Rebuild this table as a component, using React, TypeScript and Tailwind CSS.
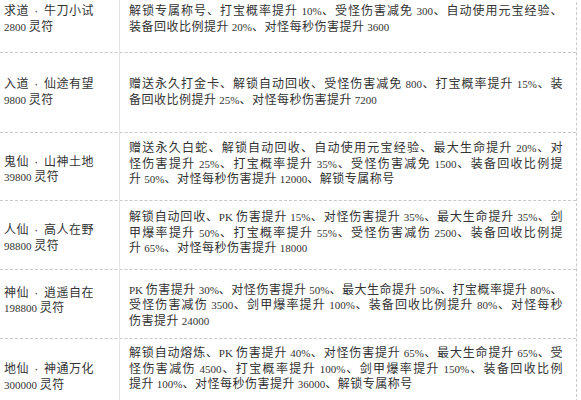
import type { ReactNode } from "react";

type Tier = {
  realm: string;
  title: string;
  price: string;
  row: string;
  left: string;
  right: string;
  lines: string[];
};

const tiers: Tier[] = [
  {
    realm: "求道",
    title: "牛刀小试",
    price: "2800",
    row: "h-[66px]",
    left: "",
    right: "",
    lines: [
      "解锁专属称号、打宝概率提升 10%、受怪伤害减免 300、自动使用元宝经验、",
      "装备回收比例提升 20%、对怪每秒伤害提升 3600",
    ],
  },
  {
    realm: "入道",
    title: "仙途有望",
    price: "9800",
    row: "h-[80px]",
    left: "",
    right: "",
    lines: [
      "赠送永久打金卡、解锁自动回收、受怪伤害减免 800、打宝概率提升 15%、装",
      "备回收比例提升 25%、对怪每秒伤害提升 7200",
    ],
  },
  {
    realm: "鬼仙",
    title: "山神土地",
    price: "39800",
    row: "h-[68px]",
    left: "pt-[7px]",
    right: "pb-[4px]",
    lines: [
      "赠送永久白蛇、解锁自动回收、自动使用元宝经验、最大生命提升 20%、对",
      "怪伤害提升 25%、打宝概率提升 35%、受怪伤害减免 1500、装备回收比例提",
      "升 50%、对怪每秒伤害提升 12000、解锁专属称号",
    ],
  },
  {
    realm: "人仙",
    title: "高人在野",
    price: "98800",
    row: "h-[69px]",
    left: "pt-[7px]",
    right: "pb-[3px]",
    lines: [
      "解锁自动回收、PK 伤害提升 15%、对怪伤害提升 35%、最大生命提升 35%、剑",
      "甲爆率提升 50%、打宝概率提升 55%、受怪伤害减伤 2500、装备回收比例提",
      "升 65%、对怪每秒伤害提升 18000",
    ],
  },
  {
    realm: "神仙",
    title: "逍遥自在",
    price: "198800",
    row: "h-[69px]",
    left: "pb-[6px]",
    right: "pt-[4px]",
    lines: [
      "PK 伤害提升 30%、对怪伤害提升 50%、最大生命提升 50%、打宝概率提升 80%、",
      "受怪伤害减伤 3500、剑甲爆率提升 100%、装备回收比例提升 80%、对怪每秒",
      "伤害提升 24000",
    ],
  },
  {
    realm: "地仙",
    title: "神通万化",
    price: "300000",
    row: "h-[68px]",
    left: "pt-[10px]",
    right: "pb-[6px]",
    lines: [
      "解锁自动熔炼、PK 伤害提升 40%、对怪伤害提升 65%、最大生命提升 65%、受",
      "怪伤害减伤 4500、打宝概率提升 100%、剑甲爆率提升 150%、装备回收比例",
      "提升 100%、对怪每秒伤害提升 36000、解锁专属称号",
    ],
  },
];

// Latin runs (numbers, "PK", %) are set narrower than the CJK text around them.
function withLatin(text: string): ReactNode {
  const parts = text.split(/([ -~]+)/);
  return parts.map((part, i) =>
    /^[ -~]+$/.test(part) ? (
      <span key={i} className="font-['Liberation_Serif'] text-[11px] tracking-normal">
        {part}
      </span>
    ) : (
      part
    ),
  );
}

export default function App() {
  return (
    <div
      className="h-[400px] w-[581px] overflow-hidden bg-white text-[12px] leading-[15.5px] tracking-[0.5px] text-[#333]"
      style={{ fontFamily: '"Liberation Sans", "Noto Sans CJK SC", sans-serif' }}
    >
      <div className="-mt-[13px] w-[577px] border-r border-dashed border-[#c8c8c8]">
        {tiers.map((tier) => (
          <div
            key={tier.realm}
            className={`flex ${tier.row} border-b border-dashed border-[#c8c8c8]`}
          >
            <div
              className={`flex w-[120px] shrink-0 flex-col justify-center border-r border-[#e2e2e2] pl-[4px] ${tier.left}`}
            >
              <p className="whitespace-nowrap">
                {tier.realm}
                <span className="inline-block w-[15px] text-center">·</span>
                {tier.title}
              </p>
              <p className="whitespace-nowrap">{withLatin(`${tier.price} `)}灵符</p>
            </div>
            <div className={`flex min-w-0 flex-1 flex-col justify-center pl-[9px] pr-[10px] ${tier.right}`}>
              {tier.lines.map((line, i) => (
                <p
                  key={i}
                  className={
                    i < tier.lines.length - 1
                      ? "w-[434px] text-justify [text-align-last:justify]"
                      : "whitespace-nowrap"
                  }
                >
                  {withLatin(line)}
                </p>
              ))}
            </div>
          </div>
        ))}
      </div>
    </div>
  );
}
